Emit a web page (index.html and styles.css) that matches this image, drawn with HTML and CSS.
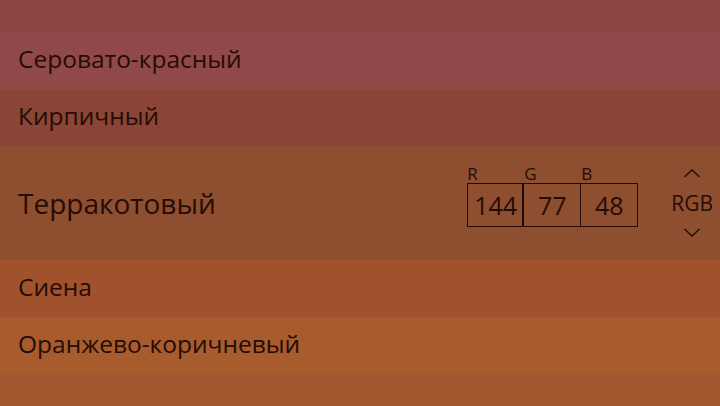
FILE: index.html
```html
<!DOCTYPE html>
<html lang="ru">
<head>
<meta charset="utf-8">
<link rel="stylesheet" href="styles.css">
</head>
<body>
<div class="list">
  <div class="row row-top"></div>
  <div class="row c-grayred"><span class="name">Серовато-красный</span></div>
  <div class="row c-brick"><span class="name">Кирпичный</span></div>
  <div class="row row-sel c-terra">
    <span class="name name-sel">Терракотовый</span>
    <div class="editor">
      <div class="channels">
        <div class="channel"><span class="lbl">R</span><span class="val">144</span></div>
        <div class="channel"><span class="lbl">G</span><span class="val">77</span></div>
        <div class="channel"><span class="lbl">B</span><span class="val">48</span></div>
      </div>
      <div class="mode">
        <svg class="chev" width="18" height="9" viewBox="0 0 18 9"><path d="M1.5 8 L9 1 L16.5 8" fill="none" stroke="#250c06" stroke-width="1.4"/></svg>
        <span class="mode-txt">RGB</span>
        <svg class="chev" width="18" height="9" viewBox="0 0 18 9"><path d="M1.5 1 L9 8 L16.5 1" fill="none" stroke="#250c06" stroke-width="1.4"/></svg>
      </div>
    </div>
  </div>
  <div class="row c-sienna"><span class="name">Сиена</span></div>
  <div class="row c-orange"><span class="name">Оранжево-коричневый</span></div>
  <div class="row row-bottom"></div>
</div>
</body>
</html>
```
FILE: styles.css
```css
html, body {
  margin: 0;
  padding: 0;
}
body {
  width: 720px;
  height: 406px;
  overflow: hidden;
  font-family: "Open Sans", "Noto Sans", sans-serif;
  color: #250c06;
  background: #a3582e;
}
.list {
  display: flex;
  flex-direction: column;
}
.row {
  height: 57px;
  display: flex;
  align-items: center;
  padding-left: 18px;
  box-sizing: border-box;
}
.row-top {
  height: 32px;
  background: #8a4543;
}
.c-grayred { background: #914848; }
.c-brick { background: #8a4536; }
.c-terra { background: #8e4e30; }
.c-sienna { background: #a0522d; }
.c-orange { background: #a85b2d; }
.row-bottom {
  height: 32px;
  background: #a3572e;
}
.name {
  font-size: 24.5px;
  line-height: 1;
  margin-top: -3px;
}
.row-sel {
  height: 114px;
  justify-content: space-between;
  padding-right: 7px;
}
.name-sel {
  font-size: 28px;
  margin-top: 0;
}
.editor {
  display: flex;
  align-items: center;
  gap: 33px;
}
.channels {
  display: flex;
  margin-top: -14px;
}
.channel {
  display: flex;
  flex-direction: column;
  width: 57px;
}
.lbl {
  font-size: 17px;
  line-height: 18px;
}
.val {
  height: 44px;
  box-sizing: border-box;
  border: 1.5px solid #250c06;
  border-left-width: 0;
  display: flex;
  align-items: center;
  justify-content: center;
  font-size: 25px;
}
.channel:first-child .val {
  border-left-width: 1.5px;
}
.channel:nth-child(2) .val {
  border-left: 2px solid #250c06;
  margin-left: -2px;
}
.mode {
  display: flex;
  flex-direction: column;
  align-items: center;
  gap: 14px;
}
.mode-txt {
  font-size: 21px;
  line-height: 22px;
}
.chev { display: block; }
```
